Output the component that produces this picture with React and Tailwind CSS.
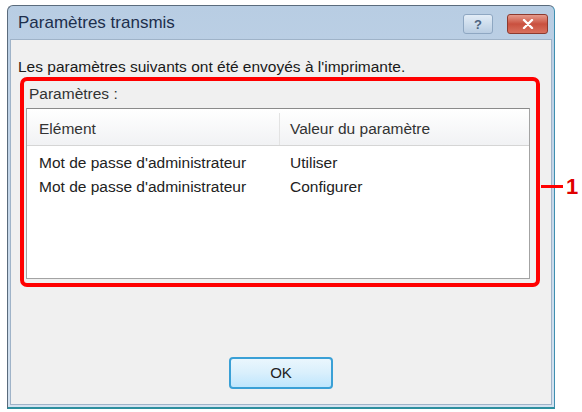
import React from 'react';

const rows = [
  { name: "Mot de passe d'administrateur", value: 'Utiliser' },
  { name: "Mot de passe d'administrateur", value: 'Configurer' },
];

function TitleButtons() {
  return (
    <div className="flex items-start gap-[14px] mt-[8px] mr-[6px]">
      <div className="w-[30px] h-[20px] rounded-[3px] border border-[#8ea7c2] bg-gradient-to-b from-[#e3edf7] to-[#b9cde2] flex items-center justify-center text-[13px] font-bold text-[#4d6480] leading-none">
        ?
      </div>
      <div className="w-[41px] h-[20px] rounded-[3px] border border-[#8d3a2f] bg-gradient-to-b from-[#e59a8c] via-[#c9503f] to-[#d8705e] flex items-center justify-center">
        <svg width="12" height="10" viewBox="0 0 12 10">
          <path d="M2 1 L10 9 M10 1 L2 9" stroke="#ffffff" strokeWidth="2.4" strokeLinecap="round" />
        </svg>
      </div>
    </div>
  );
}

export default function App() {
  return (
    <div
      className="relative w-[582px] h-[412px] bg-white overflow-hidden"
      style={{ fontFamily: '"Liberation Sans", Arial, sans-serif' }}
    >
      <div className="ml-[7px] mt-[5px] w-[548px] h-[404px] flex flex-col rounded-t-[6px] border border-[#5a6b7c] border-r-[#3f8fb0] border-b-[#2d8f9e] border-b-2 bg-gradient-to-b from-[#b8cde3] to-[#d4e2f0]">
        <div className="h-[33px] flex items-start justify-between shrink-0">
          <div className="pl-[10px] pt-[8px] text-[17px] text-[#1d2f4d] leading-none">Paramètres transmis</div>
          <TitleButtons />
        </div>
        <div className="flex-1 mx-[2px] mb-[2px] bg-[#f0f0f0] border border-[#9fb3c8] flex flex-col">
          <div className="pl-[7px] pt-[19px] text-[15.5px] text-[#1a1a1a] leading-none">
            Les paramètres suivants ont été envoyés à l'imprimante.
          </div>
          <div className="ml-[9px] mt-[2px] w-[520px] h-[210px] border-[4px] border-[#ff0000] rounded-[7px] flex flex-col">
            <div className="pl-[5px] pt-[5px] h-[27px] text-[15.5px] text-[#333333] leading-none">Paramètres :</div>
            <div className="ml-[2px] w-[504px] flex-1 mb-[4px] bg-white border border-[#a3a3a3] border-t-[#8a8a8a] flex flex-col">
              <div className="h-[37px] flex items-center pt-[4px] bg-gradient-to-b from-[#ffffff] to-[#f1f2f4] border-b border-[#d5d5d5] text-[15.5px] text-[#333333]">
                <div className="w-[252px] pl-[12px]">Elément</div>
                <div className="flex-1 border-l border-[#e3e3e3] pl-[10px] h-full flex items-center">Valeur du paramètre</div>
              </div>
              <div className="pt-[5px] flex flex-col">
                {rows.map((r, i) => (
                  <div key={i} className="h-[24px] flex items-center text-[15.5px] text-[#222222]">
                    <div className="w-[252px] pl-[12px] whitespace-nowrap">{r.name}</div>
                    <div className="pl-[11px]">{r.value}</div>
                  </div>
                ))}
              </div>
            </div>
          </div>
          <div className="flex-1 flex items-end justify-center pb-[15px]">
            <button className="w-[104px] h-[32px] rounded-[4px] border-2 border-[#3aa0d6] bg-gradient-to-b from-[#eaf6fd] via-[#d9effc] to-[#bee6fd] text-[15px] text-[#222222]">
              OK
            </button>
          </div>
        </div>
      </div>
      <div className="absolute left-[541px] top-[185px] w-[22px] h-[3px] bg-[#ff0000]" />
      <div className="absolute left-[566px] top-[176px] text-[22px] font-bold text-[#e00000] leading-none">1</div>
    </div>
  );
}
